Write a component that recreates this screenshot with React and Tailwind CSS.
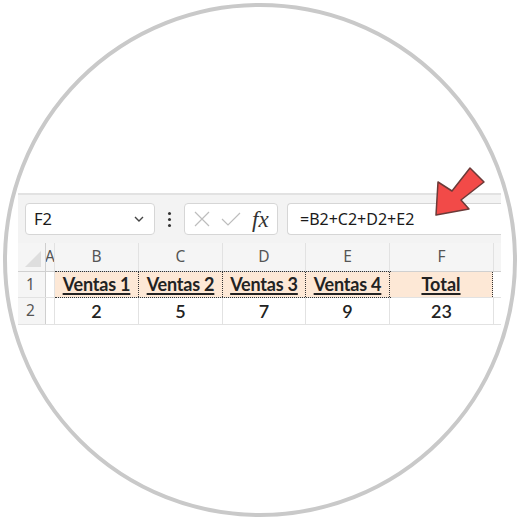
import React from "react";

const cols = [
  { key: "A", w: "w-[9px]" },
  { key: "B", w: "w-[84px]" },
  { key: "C", w: "w-[84px]" },
  { key: "D", w: "w-[83px]" },
  { key: "E", w: "w-[84px]" },
  { key: "F", w: "w-[104px]" },
];

const heads = ["Ventas 1", "Ventas 2", "Ventas 3", "Ventas 4"];
const vals = ["2", "5", "7", "9", "23"];

function Arrow() {
  return (
    <svg className="absolute left-[428px] top-[160px]" width="64" height="64" viewBox="0 0 64 64">
      <polygon
        points="8,55 10,22 24,31 42,8 56,22 33,40 41,49"
        fill="#f24a48"
        stroke="#6b3a38"
        strokeWidth="1.5"
        strokeLinejoin="round"
      />
    </svg>
  );
}

export default function App() {
  return (
    <div className="w-[520px] h-[520px] bg-white flex items-center justify-center relative font-['Noto_Sans',sans-serif]">
      <div className="w-[514px] h-[514px] rounded-full border-4 border-[#c9c9c9] overflow-hidden flex flex-col">
        <div className="mt-[186px] ml-[11px] w-[483px] flex flex-col">
          {/* toolbar */}
          <div className="h-[50px] bg-[#f3f3f3] border-t-2 border-[#e2e2e2] flex items-center gap-0 pl-[7px]">
            <div className="w-[130px] h-[32px] bg-white border border-[#d6d6d6] rounded-[4px] flex items-center justify-between px-[8px] text-[16.5px] text-[#1a1a1a]">
              <span>F2</span>
              <svg width="14" height="14" viewBox="0 0 14 14">
                <path d="M3 5 L7 9 L11 5" fill="none" stroke="#444" strokeWidth="1.4" />
              </svg>
            </div>
            <div className="w-[29px] flex flex-col items-center gap-[3px]">
              <span className="w-[3px] h-[3px] rounded-full bg-[#333]" />
              <span className="w-[3px] h-[3px] rounded-full bg-[#333]" />
              <span className="w-[3px] h-[3px] rounded-full bg-[#333]" />
            </div>
            <div className="w-[94px] h-[32px] bg-white border border-[#d6d6d6] rounded-[4px] flex items-center pl-[8px] gap-[10px]">
              <svg width="18" height="18" viewBox="0 0 18 18">
                <path d="M2 2 L16 16 M16 2 L2 16" stroke="#bdbdbd" strokeWidth="1.2" />
              </svg>
              <svg width="20" height="18" viewBox="0 0 20 18">
                <path d="M1 9 L7 15 L19 3" fill="none" stroke="#bdbdbd" strokeWidth="1.2" />
              </svg>
              <span className="font-['Liberation_Serif',serif] italic text-[23px] text-[#333] leading-none ml-[1px]">fx</span>
            </div>
            <div className="flex-1 ml-[9px] h-[32px] bg-white border border-[#d6d6d6] border-r-0 rounded-l-[4px] flex items-center pl-[12px] text-[16px] text-[#1a1a1a]">
              =B2+C2+D2+E2
            </div>
          </div>

          {/* column headers */}
          <div className="h-[29px] bg-[#f5f5f5] flex border-b border-[#d0d0d0] text-[15.5px] text-[#555]">
            <div className="w-[28px] border-r border-[#cfcfcf] flex items-end justify-end pr-[4px] pb-[4px]">
              <svg width="16" height="16" viewBox="0 0 16 16">
                <polygon points="16,0 16,16 0,16" fill="#dedede" />
              </svg>
            </div>
            {cols.map((c) => (
              <div key={c.key} className={`${c.w} border-r border-[#e2e2e2] flex items-center justify-center overflow-hidden`}>
                {c.key}
              </div>
            ))}
            <div className="flex-1" />
          </div>

          {/* row 1 */}
          <div className="h-[26px] flex border-b border-[#e2e2e2] font-['Lato',sans-serif]">
            <div className="w-[28px] bg-[#f5f5f5] border-r border-[#cfcfcf] text-[15.5px] text-[#555] font-['Noto_Sans',sans-serif] flex items-center pl-[8px]">1</div>
            <div className="w-[9px] border-r border-[#e2e2e2]" />
            <div className="flex border border-dotted border-[#333] -my-px">
              {heads.map((h, i) => (
                <div
                  key={h}
                  className={`${i === 2 ? "w-[83px]" : "w-[84px]"} ${i === 0 ? "-ml-px" : ""} bg-[#fde8d6] border-r border-dotted border-[#333] flex items-center justify-center font-bold text-[18px] tracking-[-0.2px] text-[#222] underline underline-offset-2 decoration-[1.5px]`}
                >
                  {h}
                </div>
              ))}
            </div>
            <div className="w-[103px] bg-[#fde8d6] border-r border-dotted border-[#333] flex items-center justify-center font-bold text-[18px] text-[#222] underline underline-offset-2 decoration-[1.5px] -ml-px">
              Total
            </div>
            <div className="flex-1" />
          </div>

          {/* row 2 */}
          <div className="h-[27px] flex border-b border-[#e2e2e2] font-['Lato',sans-serif]">
            <div className="w-[28px] bg-[#f5f5f5] border-r border-[#cfcfcf] text-[15.5px] text-[#555] font-['Noto_Sans',sans-serif] flex items-center pl-[8px]">2</div>
            <div className="w-[9px] border-r border-[#e2e2e2]" />
            {vals.map((v, i) => (
              <div
                key={i}
                className={`${cols[i + 1].w} border-r border-[#e2e2e2] flex items-center justify-center text-[18px] text-[#222] font-semibold`}
              >
                {v}
              </div>
            ))}
            <div className="flex-1" />
          </div>
        </div>
      </div>
      <Arrow />
    </div>
  );
}
